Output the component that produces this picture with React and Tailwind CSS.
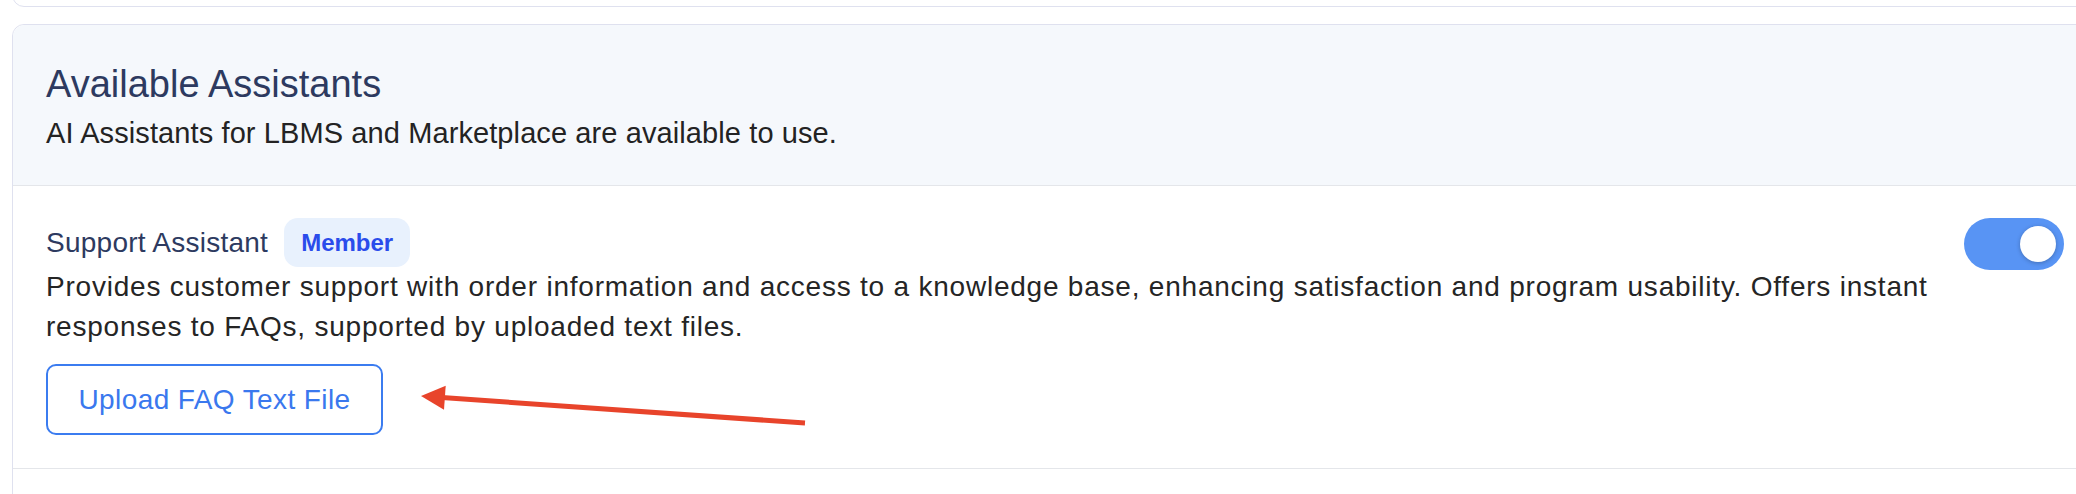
import React from "react";

export default function App() {
  return (
    <div
      className="relative w-[2076px] h-[494px] overflow-hidden bg-white"
      style={{ fontFamily: '"Liberation Sans", Arial, Helvetica, sans-serif' }}
    >
      <div className="pl-[12px]">
        <div className="w-[2086px] h-[57px] -mt-[50px] border border-[#dfe1ef] rounded-[12px] bg-white" />
        <div className="w-[2086px] mt-[17px] border border-[#dfe1ef] rounded-t-[12px] bg-white">
          <div className="bg-[#f5f8fc] rounded-t-[12px] border-b border-[#e4e6ea] pl-[33px] pr-[33px] pt-[37px] pb-[32px]">
            <h2 className="text-[38px] leading-[44px] text-[#2d3a60] font-normal">
              Available Assistants
            </h2>
            <p className="mt-[7px] text-[29px] leading-[40px] tracking-[0.1px] text-[#232323]">
              AI Assistants for LBMS and Marketplace are available to use.
            </p>
          </div>
          <div className="flex items-start gap-[12px] pl-[33px] pr-[33px] pt-[32px] pb-[33px] border-b border-[#e4e6ea]">
            <div className="flex-1 min-w-0">
              <div className="flex items-center gap-[16px]">
                <span className="text-[28px] leading-[40px] tracking-[0.25px] text-[#2d3a60]">Support Assistant</span>
                <span className="h-[49px] px-[17px] flex items-center rounded-[14px] bg-[#e8f1fd] text-[#2a4ceb] text-[24px] font-bold">
                  Member
                </span>
              </div>
              <p className="text-[28px] leading-[40px] tracking-[0.78px] text-[#252525]">
                Provides customer support with order information and access to a knowledge base, enhancing satisfaction and program usability. Offers instant responses to FAQs, supported by uploaded text files.
              </p>
              <button className="mt-[17px] w-[337px] h-[71px] border-2 border-[#3b7cf0] rounded-[10px] text-[28px] tracking-[0.4px] text-[#3a78ee] bg-white flex items-center justify-center">
                Upload FAQ Text File
              </button>
            </div>
            <div className="w-[100px] h-[52px] rounded-full bg-[#5894f4] flex items-center justify-end pr-[8px] shrink-0">
              <div className="w-[36px] h-[36px] rounded-full bg-white shadow-[0_1px_4px_rgba(0,0,0,0.25)]" />
            </div>
          </div>
          <div className="h-[60px]" />
        </div>
      </div>
      <svg
        className="absolute left-0 top-0 pointer-events-none"
        width="2076"
        height="494"
        viewBox="0 0 2076 494"
      >
        <line x1="442" y1="397.5" x2="805" y2="423" stroke="#e8442b" strokeWidth="5" />
        <polygon points="421,396 445.7,385.7 444,409.7" fill="#e8442b" />
      </svg>
    </div>
  );
}
